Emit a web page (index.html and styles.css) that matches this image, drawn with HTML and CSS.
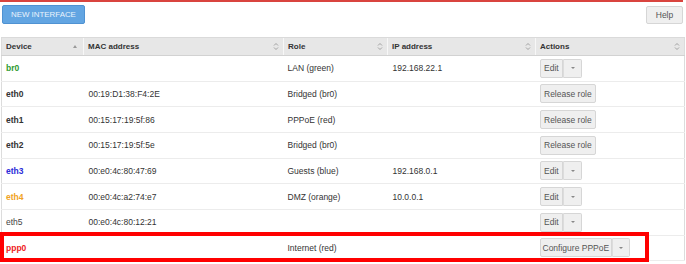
FILE: index.html
```html
<!DOCTYPE html>
<html>
<head>
<meta charset="utf-8">
<link rel="stylesheet" href="styles.css">
</head>
<body>
<div class="page">
  <div class="topline"></div>
  <div class="toolbar">
    <button class="btn-primary">NEW INTERFACE</button>
    <button class="btn help">Help</button>
  </div>
  <table class="grid">
    <colgroup>
      <col class="c-dev"><col class="c-mac"><col class="c-role"><col class="c-ip"><col class="c-act">
    </colgroup>
    <thead>
      <tr>
        <th><span class="th-in">Device<span class="tri"></span></span></th>
        <th><span class="th-in">MAC address<svg class="sort" viewBox="0 0 6 9" width="6" height="9"><path d="M1 3.5 L3 1.5 L5 3.5 M1 5.5 L3 7.5 L5 5.5" fill="none" stroke="#999" stroke-width="0.9"/></svg></span></th>
        <th><span class="th-in">Role<svg class="sort" viewBox="0 0 6 9" width="6" height="9"><path d="M1 3.5 L3 1.5 L5 3.5 M1 5.5 L3 7.5 L5 5.5" fill="none" stroke="#999" stroke-width="0.9"/></svg></span></th>
        <th><span class="th-in">IP address<svg class="sort" viewBox="0 0 6 9" width="6" height="9"><path d="M1 3.5 L3 1.5 L5 3.5 M1 5.5 L3 7.5 L5 5.5" fill="none" stroke="#999" stroke-width="0.9"/></svg></span></th>
        <th><span class="th-in">Actions<svg class="sort" viewBox="0 0 6 9" width="6" height="9"><path d="M1 3.5 L3 1.5 L5 3.5 M1 5.5 L3 7.5 L5 5.5" fill="none" stroke="#999" stroke-width="0.9"/></svg></span></th>
      </tr>
    </thead>
    <tbody>
      <tr>
        <td class="dev green">br0</td><td></td><td>LAN (green)</td><td>192.168.22.1</td>
        <td><span class="split"><button class="btn sm">Edit</button><button class="btn sm caret"><span class="car"></span></button></span></td>
      </tr>
      <tr>
        <td class="dev">eth0</td><td>00:19:D1:38:F4:2E</td><td>Bridged (br0)</td><td></td>
        <td><button class="btn sm">Release role</button></td>
      </tr>
      <tr>
        <td class="dev">eth1</td><td>00:15:17:19:5f:86</td><td>PPPoE (red)</td><td></td>
        <td><button class="btn sm">Release role</button></td>
      </tr>
      <tr>
        <td class="dev">eth2</td><td>00:15:17:19:5f:5e</td><td>Bridged (br0)</td><td></td>
        <td><button class="btn sm">Release role</button></td>
      </tr>
      <tr>
        <td class="dev blue">eth3</td><td>00:e0:4c:80:47:69</td><td>Guests (blue)</td><td>192.168.0.1</td>
        <td><span class="split"><button class="btn sm">Edit</button><button class="btn sm caret"><span class="car"></span></button></span></td>
      </tr>
      <tr>
        <td class="dev orange">eth4</td><td>00:e0:4c:a2:74:e7</td><td>DMZ (orange)</td><td>10.0.0.1</td>
        <td><span class="split"><button class="btn sm">Edit</button><button class="btn sm caret"><span class="car"></span></button></span></td>
      </tr>
      <tr>
        <td class="plain">eth5</td><td>00:e0:4c:80:12:21</td><td></td><td></td>
        <td><span class="split"><button class="btn sm">Edit</button><button class="btn sm caret"><span class="car"></span></button></span></td>
      </tr>
      <tr>
        <td class="dev red">ppp0</td><td></td><td>Internet (red)</td><td></td>
        <td><span class="split"><button class="btn sm wide">Configure PPPoE</button><button class="btn sm caret"><span class="car"></span></button></span></td>
      </tr>
    </tbody>
  </table>
  <div class="highlight"></div>
</div>
</body>
</html>
```

FILE: styles.css
```css
html, body {
  margin: 0;
  padding: 0;
  background: #fff;
}
body {
  font-family: "Liberation Sans", Arial, sans-serif;
  font-size: 8.5px;
  color: #333;
}
.page {
  position: relative;
  width: 686px;
  height: 264px;
  overflow: hidden;
}
.topline {
  height: 2px;
  width: 683px;
  background: #d9443f;
}
.toolbar {
  display: flex;
  justify-content: space-between;
  align-items: flex-start;
  padding: 3px 3px 0 2px;
}
button {
  font-family: inherit;
  margin: 0;
  cursor: default;
}
.btn-primary {
  height: 19px;
  padding: 0 8px;
  background: #62a5e2;
  border: 1px solid #4f92d2;
  border-radius: 2px;
  color: #eaf3fc;
  font-size: 7.9px;
}
.btn {
  height: 18px;
  margin-top: 1px;
  padding: 0 5px;
  background: #efefef;
  border: 1px solid #d6d6d6;
  border-radius: 2px;
  color: #555;
  font-size: 8.5px;
}
.btn.help {
  width: 37px;
  padding: 0;
}
.grid {
  margin: 13px 0 0 1px;
  width: 683px;
  border-collapse: collapse;
  table-layout: fixed;
  border-left: 1px solid #dcdcdc;
  border-right: 1px solid #dcdcdc;
}
.c-dev { width: 82px; }
.c-mac { width: 200px; }
.c-role { width: 104px; }
.c-ip { width: 148px; }
.c-act { width: 149px; }
th {
  height: 17px;
  padding: 0 4px;
  background: #e7e7e7;
  border-top: 1px solid #dadada;
  border-bottom: 1px solid #d2d2d2;
  border-left: 1px solid #f7f7f7;
  text-align: left;
  font-size: 8px;
  font-weight: bold;
  color: #333;
}
th:first-child { border-left: none; }
.th-in {
  display: flex;
  justify-content: space-between;
  align-items: center;
}
.tri {
  width: 0;
  height: 0;
  margin-right: 2px;
  border-left: 2.5px solid transparent;
  border-right: 2.5px solid transparent;
  border-bottom: 3px solid #999;
}
.sort { margin-right: 0; }
td {
  height: 24.67px;
  padding: 0 4px;
  border-bottom: 1px solid #ececec;
  white-space: nowrap;
  vertical-align: middle;
}
td:nth-child(2) { padding-left: 5px; }
td:nth-child(4) { padding-left: 5px; }
.dev { font-weight: bold; color: #333; }
.plain { font-weight: normal; color: #444; }
.green { color: #2f9a2f; }
.blue { color: #2b2bd8; }
.orange { color: #f0a323; }
.red { color: #ee2222; }
.btn.sm {
  height: 19px;
  margin-top: 0;
  padding: 0 3.5px;
  vertical-align: middle;
}
.split {
  display: inline-flex;
  vertical-align: middle;
}
.split .btn.sm:first-child {
  border-top-right-radius: 0;
  border-bottom-right-radius: 0;
}
.split .caret {
  width: 19px;
  padding: 0;
  border-left: none;
  border-top-left-radius: 0;
  border-bottom-left-radius: 0;
  display: flex;
  align-items: center;
  justify-content: center;
}
.split .btn.sm.wide { padding: 0 2px; }
.split .wide + .caret { width: 18px; }
.car {
  width: 0;
  height: 0;
  border-left: 2.5px solid transparent;
  border-right: 2.5px solid transparent;
  border-top: 2.5px solid #888;
}
.split .btn.sm:first-child + .caret { border-left: 1px solid #dcdcdc; }
.highlight {
  position: absolute;
  left: 0;
  top: 232px;
  width: 649px;
  height: 30px;
  box-sizing: border-box;
  border: 4px solid #ff0000;
  pointer-events: none;
}
```
